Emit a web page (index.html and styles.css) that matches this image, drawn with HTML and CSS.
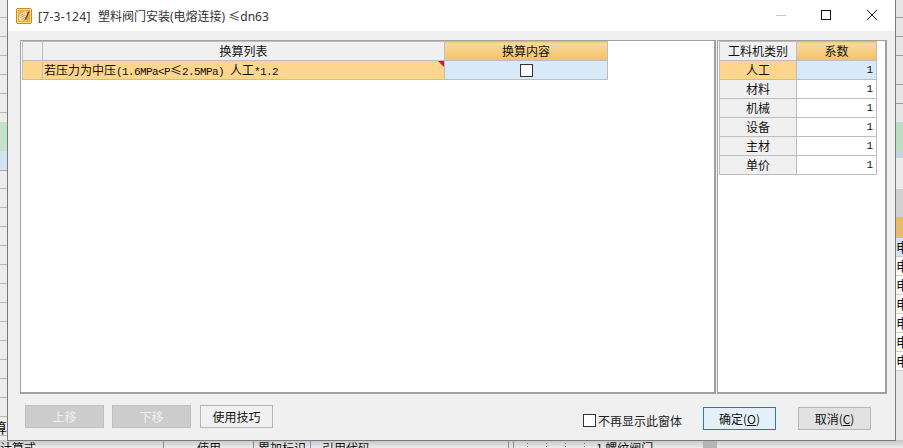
FILE: index.html
```html
<!DOCTYPE html>
<html>
    <head>
        <meta charset="utf8">
        <title>换算</title>
        <link rel="stylesheet" href="styles.css">
    </head>
    <body>
        <div class="backdrop">
            <div class="back_left">
                <div class="back_green"></div>
                <div class="back_blue"></div>
                <span class="back_a">算</span>
            </div>
            <div class="back_bottom">
                <span class="back_b">计算式</span>
                <span class="back_c">使用</span>
                <span class="back_d">累加标识</span>
                <span class="back_e">引用代码</span>
                <span class="back_f">1 螺纹阀门</span>
                <i class="back_line line_1"></i>
                <i class="back_line line_2"></i>
                <i class="back_line line_3"></i>
                <i class="back_line line_4"></i>
                <i class="back_line line_5"></i>
                <i class="back_dots dots_1"></i>
                <i class="back_dots dots_2"></i>
                <i class="back_dots dots_3"></i>
                <i class="back_dots dots_4"></i>
                <i class="back_scroll"></i>
            </div>
            <div class="back_right">
                <div class="right_rows"></div>
                <div class="right_green"></div>
                <div class="right_blue"></div>
                <div class="right_light"></div>
                <div class="right_gray"></div>
                <div class="back_orange"></div>
                <div class="back_cell back_sel">电</div>
                <div class="back_cell">电</div>
                <div class="back_cell">电</div>
                <div class="back_cell">电</div>
                <div class="back_cell">电</div>
                <div class="back_cell">电</div>
                <div class="back_cell">电</div>
            </div>
        </div>
        <div class="dialog">
            <div class="title_bar">
                <svg class="app_icon" width="16" height="16" viewBox="0 0 16 16">
                    <rect x="0.5" y="0.5" width="15" height="15" rx="1.5" fill="#f0b040" stroke="#c98a28"/>
                    <rect x="1.5" y="1.5" width="13" height="13" fill="none" stroke="#fbd98a"/>
                    <path d="M3 12 L4 6 L10 3 L11 9 L6 13 Z" fill="#f6ecd2"/>
                    <path d="M4.5 7.5 L9 5 M4.5 9.5 L9.5 7 M5 11.5 L9.5 9" stroke="#c89a58" fill="none"/>
                    <path d="M9.5 11.5 L13 3.5" stroke="#8a3414" stroke-width="1.4"/>
                </svg>
                <span class="title_text"><span class="title_code">[7-3-124]</span>塑料阀门安装(电熔连接) ≤dn63</span>
                <div class="window_btns">
                    <svg width="46" height="31" viewBox="0 0 46 31"><path d="M19 15.5 H29" stroke="#c8c8c8"/></svg>
                    <svg width="46" height="31" viewBox="0 0 46 31"><rect x="18.5" y="10.5" width="9" height="9" fill="none" stroke="#111"/></svg>
                    <svg width="46" height="31" viewBox="0 0 46 31"><path d="M18 10 L28 20 M28 10 L18 20" stroke="#222" fill="none"/></svg>
                </div>
            </div>
            <div class="content">
                <div class="panels">
                    <div class="panel panel_main">
                        <table class="grid main_grid">
                            <tr>
                                <td class="corner"></td>
                                <td class="head_gray col_name">换算列表</td>
                                <td class="head_orange col_val">换算内容</td>
                            </tr>
                            <tr>
                                <td class="row_sel"></td>
                                <td class="row_sel name_cell">若压力为中压<span class="latin">(1.6MPa&lt;P</span>≤<span class="latin">2.5MPa) </span>人工<span class="latin">*1.2</span><i class="red_mark"></i></td>
                                <td class="row_blue"><span class="check_box cell_check"></span></td>
                            </tr>
                        </table>
                    </div>
                    <div class="panel panel_side">
                        <table class="grid side_grid">
                            <tr><td class="head_gray col_type">工料机类别</td><td class="head_orange">系数</td></tr>
                            <tr><td class="row_sel">人工</td><td class="row_blue num">1</td></tr>
                            <tr><td class="head_gray">材料</td><td class="num">1</td></tr>
                            <tr><td class="head_gray">机械</td><td class="num">1</td></tr>
                            <tr><td class="head_gray">设备</td><td class="num">1</td></tr>
                            <tr><td class="head_gray">主材</td><td class="num">1</td></tr>
                            <tr><td class="head_gray">单价</td><td class="num">1</td></tr>
                        </table>
                    </div>
                </div>
                <div class="footer">
                    <button class="btn btn_off">上移</button>
                    <button class="btn btn_off">下移</button>
                    <button class="btn btn_tip">使用技巧</button>
                    <label class="no_show"><span class="check_box"></span>不再显示此窗体</label>
                    <button class="btn btn_ok">确定(<u>O</u>)</button>
                    <button class="btn btn_cancel">取消(<u>C</u>)</button>
                </div>
            </div>
        </div>
    </body>
</html>
```

FILE: styles.css
```css
html,body{
    margin:0;
    padding:0;
}
body{
    width:903px;
    height:448px;
    overflow:hidden;
    position:relative;
    background:#e8e8e8;
    font-family:"Noto Sans CJK SC","Liberation Sans",sans-serif;
    font-size:12px;
    color:#111;
}
.backdrop{
    position:absolute;
    inset:0;
}
.back_left{
    position:absolute;
    left:0;
    top:0;
    width:8px;
    height:440px;
    overflow:hidden;
    background:repeating-linear-gradient(#ececec 0,#ececec 17px,#b8b8b8 17px,#b8b8b8 18px,#ececec 18px,#ececec 19px);
}
.back_green{
    position:absolute;
    left:0;
    top:122px;
    width:8px;
    height:29px;
    background:#c5e3cb;
}
.back_blue{
    position:absolute;
    left:0;
    top:151px;
    width:8px;
    height:19px;
    background:#d3e3f0;
    border-bottom:1px solid #aaa;
}
.back_a{
    position:absolute;
    left:-7px;
    top:417px;
    font-size:14px;
}
.back_bottom{
    position:absolute;
    left:0;
    right:0;
    top:440px;
    height:8px;
    overflow:hidden;
    background:linear-gradient(#c4c4c4,#ececec);
}
.back_bottom span{
    position:absolute;
    top:-1px;
    white-space:nowrap;
}
.back_b{left:0;}
.back_c{left:197px;}
.back_d{left:258px;}
.back_e{left:322px;}
.back_f{left:596px;}
.back_line{
    position:absolute;
    top:0;
    width:1px;
    height:8px;
    background:#8c8c8c;
}
.line_1{left:163px;}
.line_2{left:253px;}
.line_3{left:310px;}
.line_4{left:508px;}
.line_5{left:513px;}
.back_dots{
    position:absolute;
    top:0;
    width:1px;
    height:8px;
    background:repeating-linear-gradient(#777 0,#777 1px,transparent 1px,transparent 3px);
}
.dots_1{left:527px;}
.dots_2{left:546px;}
.dots_3{left:565px;}
.dots_4{left:584px;}
.back_scroll{
    position:absolute;
    left:703px;
    top:0;
    width:14px;
    height:8px;
    background:#b4b4b4;
}
.back_right{
    position:absolute;
    left:896px;
    top:0;
    width:7px;
    overflow:hidden;
}
.right_rows{
    height:122px;
    background:
        linear-gradient(#9c9c9c,#9c9c9c) 0 17px/100% 1px no-repeat,
        linear-gradient(#9c9c9c,#9c9c9c) 0 36px/100% 1px no-repeat,
        linear-gradient(#9c9c9c,#9c9c9c) 0 55px/100% 1px no-repeat,
        linear-gradient(#9c9c9c,#9c9c9c) 0 84px/100% 1px no-repeat,
        linear-gradient(#9c9c9c,#9c9c9c) 0 103px/100% 1px no-repeat,
        #e6e6e6;
}
.right_green{
    height:29px;
    background:#bcdcc4;
}
.right_blue{
    height:7px;
    background:#c4d6e0;
}
.right_light{
    height:31px;
    background:#ececec;
}
.right_gray{
    height:28px;
    background:#d2d2d2;
}
.back_orange{
    height:21px;
    background:#e8bb6a;
}
.back_cell{
    height:18px;
    line-height:18px;
    border-bottom:1px solid #ccc;
    font-size:13px;
    white-space:nowrap;
    background:#fff;
}
.back_sel{
    background:#d3e3f0;
}
.dialog{
    position:absolute;
    left:7px;
    top:0;
    width:887px;
    height:440px;
    background:#f0f0f0;
    border:1px solid #7a7a7a;
    border-top:0;
}
.title_bar{
    height:31px;
    background:#fff;
    display:flex;
    align-items:center;
    padding-left:8px;
}
.app_icon{
    margin-right:6px;
}
.title_text{
    font-family:"Noto Sans","Noto Sans CJK SC",sans-serif;
    font-size:12px;
    color:#333;
}
.title_code{
    display:inline-block;
    width:60px;
    letter-spacing:0.3px;
}
.window_btns{
    margin-left:auto;
    display:flex;
}
.content{
    padding:9px 8px 0 12px;
}
.panels{
    display:flex;
    height:354px;
    gap:1px;
}
.panel{
    background:#fff;
    border:1px solid #a0a0a0;
    border-bottom-width:2px;
    border-right-width:2px;
    box-sizing:border-box;
    height:354px;
}
.panel_main{
    width:696px;
}
.panel_side{
    width:170px;
}
.grid{
    border-collapse:collapse;
    table-layout:fixed;
    margin:0 0 0 1px;
}
.grid td{
    border:1px solid #bdbdbd;
    height:18px;
    padding:0;
    text-align:center;
    line-height:18px;
    white-space:nowrap;
    overflow:hidden;
}
.main_grid{
    width:585px;
}
.corner{
    width:19px;
    background:#f0f0f0;
}
.col_name{
    width:401px;
}
.col_val{
    width:162px;
}
.head_gray{
    background:#f0f0f0;
}
.head_orange{
    background:linear-gradient(#f8d9a0,#f3c265);
}
.row_sel{
    background:#fed58c;
}
.row_blue{
    background:#d8e9f7;
}
.name_cell{
    position:relative;
}
.grid td.name_cell{
    text-align:left;
    padding-left:1px;
}
.latin{
    font-family:"Liberation Mono",monospace;
    font-size:11px;
    letter-spacing:-0.6px;
    white-space:pre;
    line-height:1;
}
.red_mark{
    position:absolute;
    top:0;
    right:0;
    width:0;
    height:0;
    border-top:6px solid #e0141c;
    border-left:6px solid transparent;
}
.check_box{
    display:block;
    width:11px;
    height:11px;
    background:#fff;
    border:1px solid #333;
}
.cell_check{
    margin:0 auto;
}
.side_grid{
    width:158px;
}
.col_type{
    width:76px;
}
.grid td.num{
    text-align:right;
    padding-right:3px;
    font-family:"Liberation Mono",monospace;
    font-size:11px;
}
.footer{
    display:flex;
    align-items:flex-start;
    padding:11px 0 0 5px;
}
.btn{
    height:23px;
    padding:0;
    font:12px "Noto Sans CJK SC","Liberation Sans",sans-serif;
    border:1px solid #b5b5b5;
    color:#111;
    background:#f0f0f0;
    box-sizing:border-box;
}
.btn_off{
    width:79px;
    margin-right:8px;
    background:#ccc;
    color:#f0f0f0;
    border-color:#c0c0c0;
}
.btn_off + .btn_tip{
    margin-left:1px;
}
.btn_tip{
    width:73px;
}
.no_show{
    display:flex;
    align-items:center;
    gap:2px;
    margin:6px 0 0 310px;
    height:18px;
    font-size:12px;
    color:#222;
}
.btn_ok{
    width:73px;
    margin:2px 0 0 21px;
    background:#e3f0fa;
    border-color:#1f7fb0;
}
.btn_cancel{
    width:73px;
    margin:2px 0 0 22px;
    background:#e1e1e1;
}
```
